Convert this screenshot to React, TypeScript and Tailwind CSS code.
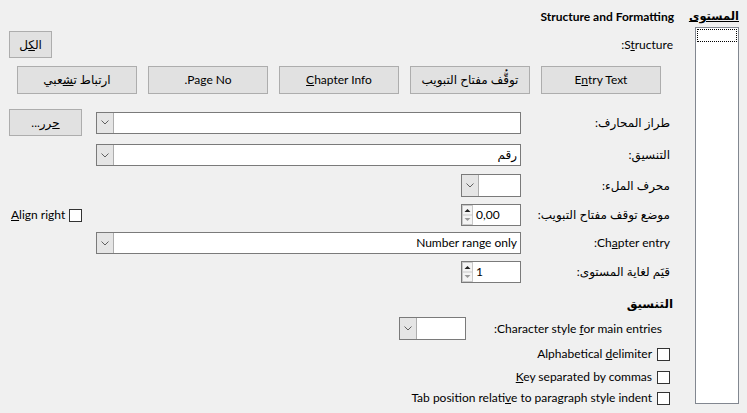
import type { ReactNode } from "react";

const ZWJ = "\u200d";

const Chevron = () => (
  <svg width="8" height="5" viewBox="0 0 8 5" className="block">
    <path d="M0.5 0.5 L4 4 L7.5 0.5" fill="none" stroke="#606060" strokeWidth="1" />
  </svg>
);

const Btn = ({ children, className = "" }: { children: ReactNode; className?: string }) => (
  <div
    className={`flex shrink-0 items-center justify-center border border-[#adadad] bg-[#e1e1e1] whitespace-nowrap ${className}`}
  >
    {children}
  </div>
);

const Combo = ({ value = "", className = "" }: { value?: string; className?: string }) => (
  <div className={`flex shrink-0 border border-[#7a7a7a] bg-white ${className}`}>
    <div className="flex-1 truncate pr-[3px] leading-[20px]">{value}</div>
    <div className="flex w-[17px] items-center justify-center border-s border-[#adadad] bg-[#e5e5e5]">
      <Chevron />
    </div>
  </div>
);

const Spin = ({ value }: { value: string }) => (
  <div className="flex h-[22px] w-[60px] shrink-0 border border-[#7a7a7a] bg-white">
    <div dir="ltr" className="flex-1 pl-[3px] text-left leading-[20px]">
      {value}
    </div>
    <svg width="11" height="20" viewBox="0 0 11 20" className="block">
      <rect x="0.5" y="0.5" width="10" height="19" fill="#f4f4f4" stroke="#c8c8c8" />
      <line x1="0.5" y1="10" x2="10.5" y2="10" stroke="#c8c8c8" />
      <path d="M2.5 7 L5.5 4 L8.5 7 Z" fill="#222" />
      <path d="M2.5 13 L5.5 16 L8.5 13 Z" fill="#9a9a9a" />
    </svg>
  </div>
);

const Check = () => <span className="inline-block h-[13px] w-[13px] shrink-0 border border-[#333333] bg-white" />;

const Label = ({ children }: { children: ReactNode }) => (
  <div className="w-[140px] shrink-0 whitespace-nowrap">{children}</div>
);

export default function App() {
  return (
    <div
      dir="rtl"
      className="flex h-[413px] w-[747px] gap-[21px] overflow-hidden bg-[#f0f0f0] pr-[8px] font-['Lato','DejaVu_Sans',sans-serif] text-[12px] text-black"
    >
      {/* المستوى */}
      <div className="flex w-[44px] shrink-0 flex-col pt-[8px]">
        <div className="h-[16px] whitespace-nowrap text-[11.5px] font-bold leading-[16px]">
          <u>المستوى</u>
        </div>
        <div className="mt-[3px] h-[377px] border border-[#828790] bg-white p-px">
          <div className="h-[13px] border border-dotted border-black" />
        </div>
      </div>

      {/* main */}
      <div className="flex w-[665px] shrink-0 flex-col pt-[9px]">
        <div className="h-[16px] font-bold leading-[16px]">Structure and Formatting</div>

        <div className="mt-[6px] flex h-[27px] items-center pr-[1px]">
          <div>
            S<u>t</u>ructure:
          </div>
          <Btn className="ms-auto h-[27px] w-[43px]">
            <span>
              {"ال" + ZWJ}
              <u>{ZWJ + "ك" + ZWJ}</u>
              {ZWJ + "ل"}
            </span>
          </Btn>
        </div>

        <div className="mt-[8px] flex h-[28px] gap-[11px] pr-[13px]">
          <Btn className="h-[28px] w-[120px]">
            <span>
              E<u>n</u>try Text
            </span>
          </Btn>
          <Btn className="h-[28px] w-[120px]">توقُّف مفتاح التبويب</Btn>
          <Btn className="h-[28px] w-[120px]">
            <span>
              <u>C</u>hapter Info
            </span>
          </Btn>
          <Btn className="h-[28px] w-[120px]">
            <span>
              Pa<u>g</u>e No.
            </span>
          </Btn>
          <Btn className="h-[28px] w-[120px]">
            <span>
              {"ارتباط ت" + ZWJ}
              <u>{ZWJ + "ش" + ZWJ}</u>
              {ZWJ + "عبي"}
            </span>
          </Btn>
        </div>

        <div className="mt-[15px] flex h-[27px] items-center gap-[9px] pr-[4px]">
          <Label>طراز المحارف:</Label>
          <Combo className="h-[22px] w-[425px]" />
          <Btn className="ms-auto h-[27px] w-[73px]">
            <span>
              <u>{"ح" + ZWJ}</u>
              {ZWJ + "رر..."}
            </span>
          </Btn>
        </div>

        <div className="mt-[8px] flex h-[22px] items-center gap-[9px] pr-[4px]">
          <Label>التنسيق:</Label>
          <Combo value="رقم" className="h-[22px] w-[425px]" />
        </div>

        <div className="mt-[8px] flex h-[23px] items-center gap-[9px] pr-[4px]">
          <Label>محرف الملء:</Label>
          <Combo className="h-[23px] w-[60px]" />
        </div>

        <div className="mt-[7px] flex h-[22px] items-center gap-[9px] pr-[4px]">
          <Label>موضع توقف مفتاح التبويب:</Label>
          <Spin value="0,00" />
          <div className="ms-auto flex items-center gap-[4px] pl-[2px]">
            <Check />
            <span>
              <u>A</u>lign right
            </span>
          </div>
        </div>

        <div className="mt-[6px] flex h-[22px] items-center gap-[9px] pr-[4px]">
          <Label>
            Ch<u>a</u>pter entry:
          </Label>
          <Combo value="Number range only" className="h-[22px] w-[425px]" />
        </div>

        <div className="mt-[7px] flex h-[22px] items-center gap-[9px] pr-[4px]">
          <Label>قيَم لغاية المستوى:</Label>
          <Spin value="1" />
        </div>

        <div className="mt-[13px] h-[16px] pr-[1px] font-bold leading-[16px]">التنسيق</div>

        <div className="mt-[5px] flex h-[23px] items-center gap-[10px] pr-[12px]">
          <div className="w-[186px] shrink-0 whitespace-nowrap">
            Character style <u>f</u>or main entries:
          </div>
          <Combo className="h-[23px] w-[67px]" />
        </div>

        <div className="mt-[6px] flex h-[16px] items-center gap-[5px] pr-[4px]">
          <Check />
          <span>
            Alphabetical <u>d</u>elimiter
          </span>
        </div>
        <div className="mt-[7px] flex h-[16px] items-center gap-[5px] pr-[4px]">
          <Check />
          <span>
            <u>K</u>ey separated by commas
          </span>
        </div>
        <div className="mt-[5px] flex h-[16px] items-center gap-[5px] pr-[4px]">
          <Check />
          <span>
            Tab position relati<u>v</u>e to paragraph style indent
          </span>
        </div>
      </div>
    </div>
  );
}
